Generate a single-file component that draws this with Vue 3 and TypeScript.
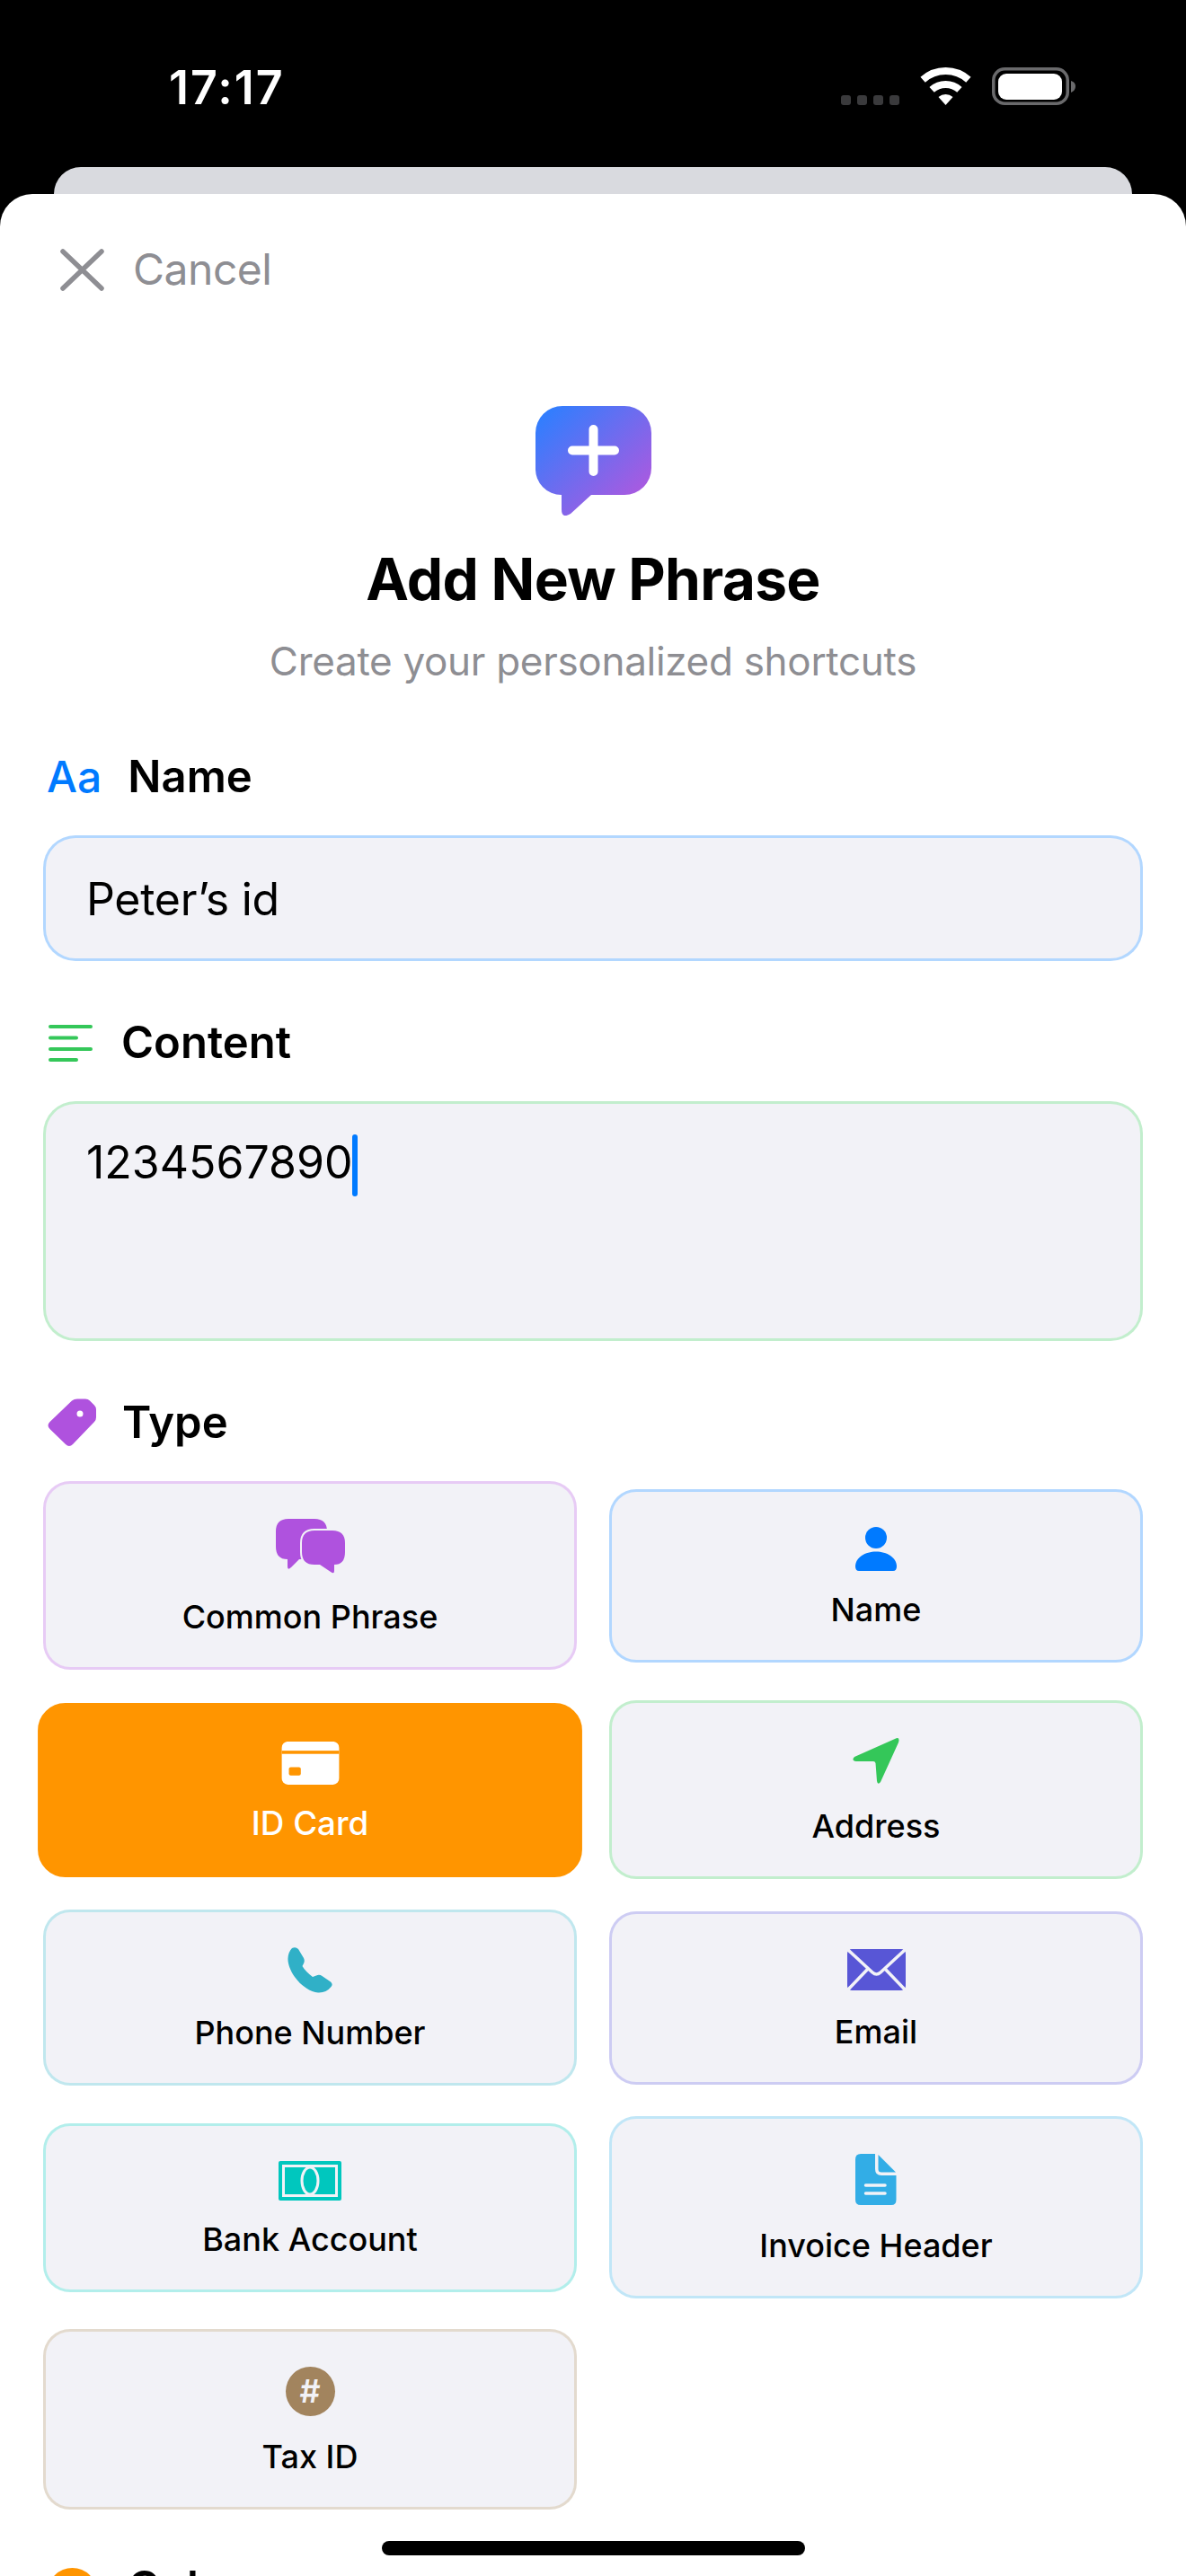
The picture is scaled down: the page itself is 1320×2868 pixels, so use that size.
<script setup lang="ts">
interface PhraseType {
  id: string
  label: string
  selected?: boolean
}

const types: PhraseType[] = [
  { id: 'common', label: 'Common Phrase' },
  { id: 'name', label: 'Name' },
  { id: 'card', label: 'ID Card', selected: true },
  { id: 'address', label: 'Address' },
  { id: 'phone', label: 'Phone Number' },
  { id: 'email', label: 'Email' },
  { id: 'bank', label: 'Bank Account' },
  { id: 'invoice', label: 'Invoice Header' },
  { id: 'tax', label: 'Tax ID' },
]
</script>

<template>
  <div class="phone">
    <header class="status">
      <span class="time">17:17</span>
      <svg class="status-icons" width="262" height="42" viewBox="0 0 262 42" aria-hidden="true">
        <g fill="#3a3a3c">
          <rect x="0" y="31" width="11" height="11" rx="3" />
          <rect x="18" y="31" width="11" height="11" rx="3" />
          <rect x="36" y="31" width="11" height="11" rx="3" />
          <rect x="54" y="31" width="11" height="11" rx="3" />
        </g>
        <g transform="translate(88 0)">
          <path d="M3.1 13.8A38 38 0 0 1 53.9 13.8" fill="none" stroke="#fff" stroke-width="8" />
          <path d="M13.1 24.9A23 23 0 0 1 43.9 24.9" fill="none" stroke="#fff" stroke-width="8" />
          <path d="M28.5 42L20.5 33.1A12 12 0 0 1 36.5 33.1Z" fill="#fff" />
        </g>
        <rect x="169.75" y="1.75" width="82.5" height="38.5" rx="12.5" fill="none" stroke="#6a6a6c" stroke-width="3.5" />
        <rect x="175" y="7" width="71" height="29" rx="9" fill="#fff" />
        <path d="M256 15Q261 16.5 261 21Q261 26 256 28Z" fill="#6a6a6c" />
      </svg>
    </header>
    <div class="under-sheet"></div>

    <main class="sheet">
      <div class="cancel">
        <svg width="49" height="47" viewBox="0 0 49 47" aria-hidden="true">
          <path d="M3 3L46 44M46 3L3 44" fill="none" stroke="#8e8e93" stroke-width="5.500" stroke-linecap="round" />
        </svg>
        <span>Cancel</span>
      </div>

      <section class="intro">
        <svg width="129" height="122" viewBox="0 0 129 122" aria-hidden="true">
          <defs>
            <linearGradient id="logoFill" x1="0" y1="0" x2="1" y2="1">
              <stop offset="0.05" stop-color="#2d7fff" />
              <stop offset="0.85" stop-color="#a95ae0" />
            </linearGradient>
          </defs>
          <path d="M30 0H99A30 30 0 0 1 129 30V69A30 30 0 0 1 99 99H62L39 120Q29 126 29 115V99A29 29 0 0 1 0 69V30A30 30 0 0 1 30 0Z" fill="url(#logoFill)" />
          <path d="M64.5 26V73M41 49.5H88" stroke="#fff" stroke-width="10" stroke-linecap="round" fill="none" />
        </svg>
        <h1>Add New Phrase</h1>
        <p>Create your personalized shortcuts</p>
      </section>

      <div class="label first">
        <span class="aa">Aa</span>
        <span class="label-text">Name</span>
      </div>
      <div class="field name-field">Peter’s id</div>

      <div class="label content-label">
        <svg width="49" height="41" viewBox="0 0 49 41" aria-hidden="true">
          <path d="M2 2H47M2 14.500H31M2 27H47M2 39H31" stroke="#34c759" stroke-width="4" stroke-linecap="round" fill="none" />
        </svg>
        <span class="label-text">Content</span>
      </div>
      <div class="field content-field">
        <span>1234567890</span>
        <i class="caret"></i>
      </div>

      <div class="label">
        <svg width="54" height="54" viewBox="0 0 54 54" aria-hidden="true">
          <path fill-rule="evenodd" fill="#af52de" d="M33 .5H42Q45 .5 47 2.500L52 7.500Q54 9.500 54 12.500V21Q54 24 52 26L28 51Q24 55 20 51L2.500 34Q-1.500 30 2.500 26L27 2.500Q29.500 .5 33 .5ZM36 13.500A3.500 3.500 0 1 0 36 20.500A3.500 3.500 0 1 0 36 13.500Z" />
        </svg>
        <span class="label-text">Type</span>
      </div>

      <div class="types">
        <button
          v-for="t in types"
          :key="t.id"
          type="button"
          class="type-card"
          :class="['t-' + t.id, { selected: t.selected }]"
        >
          <span class="type-icon">
            <svg v-if="t.id === 'common'" width="77" height="61" viewBox="0 0 77 61" aria-hidden="true">
              <path fill="#af52de" d="M14 0H43Q57 0 57 14V31Q57 45 43 45H26L17 54Q13 58 13 53V45Q0 45 0 31V14Q0 0 14 0Z" />
              <path fill="#af52de" stroke="#f2f2f7" stroke-width="4" paint-order="stroke" d="M43 13H63Q77 13 77 27V37Q77 51 65 51V58Q65 62 61 59L49 51H43Q29 51 29 37V27Q29 13 43 13Z" />
            </svg>
            <svg v-else-if="t.id === 'name'" width="46" height="49" viewBox="0 0 46 49" aria-hidden="true">
              <circle cx="23" cy="12" r="12" fill="#007aff" />
              <path fill="#007aff" d="M4 49Q0 49 0 44C0 34 11 27.500 23 27.500C35 27.500 46 34 46 44Q46 49 42 49Z" />
            </svg>
            <svg v-else-if="t.id === 'card'" width="63" height="47" viewBox="0 0 63 47" aria-hidden="true">
              <rect width="63" height="47" rx="7" fill="#fff" />
              <rect y="10" width="63" height="3.500" fill="#ff9500" />
              <rect x="8" y="28" width="13" height="9" rx="2" fill="#ff9500" />
            </svg>
            <svg v-else-if="t.id === 'address'" width="52" height="52" viewBox="0 0 52 52" aria-hidden="true">
              <path fill="#34c759" d="M47 1Q53 -2 51 5L31 49Q28 53 27 48L25.500 28Q25 26 23 26L4 26Q-2 25 2 21Z" />
            </svg>
            <svg v-else-if="t.id === 'phone'" width="50" height="51" viewBox="0 0 50 51" aria-hidden="true">
              <path fill="#30b0c7" d="M5 1Q9 -1 12 2L18 12Q19.500 15 18 18L16.500 21Q20 27 28 33L32 31.500Q35.500 30 38.500 32L48 38.500Q51 41 48.500 44Q43 51 34 50.500C26 50 15 43 8 33C3 26 0 18 .5 12Q1 5 5 1Z" />
            </svg>
            <svg v-else-if="t.id === 'email'" width="65" height="46" viewBox="0 0 65 46" aria-hidden="true">
              <rect width="65" height="46" rx="5" fill="#5856d6" />
              <path d="M1 1L28 26Q32.500 30 37 26L64 1M1 45L23 22M64 45L42 22" fill="none" stroke="#f2f2f7" stroke-width="3.500" />
            </svg>
            <svg v-else-if="t.id === 'bank'" width="70" height="44" viewBox="0 0 70 44" aria-hidden="true">
              <rect width="70" height="44" rx="2" fill="#00c7be" />
              <rect x="5.500" y="5.500" width="59" height="33" fill="none" stroke="#f2f2f7" stroke-width="3" />
              <ellipse cx="35" cy="22" rx="9" ry="15" fill="none" stroke="#f2f2f7" stroke-width="3" />
            </svg>
            <svg v-else-if="t.id === 'invoice'" width="46" height="57" viewBox="0 0 46 57" aria-hidden="true">
              <path fill="#32ade6" d="M6 0H22V17Q22 24 29 24H45.500V51Q45.500 57 40 57H6Q0 57 0 51V6Q0 0 6 0Z" />
              <path fill="#32ade6" d="M25.500 1L45 20.500H29Q25.500 20.500 25.500 17Z" />
              <path d="M11.500 35H33M11.500 44H33" stroke="#f2f2f7" stroke-width="3.500" stroke-linecap="round" fill="none" />
            </svg>
            <span v-else class="tax-disc">#</span>
          </span>
          <span class="type-label">{{ t.label }}</span>
        </button>
      </div>

      <div class="label color-label">
        <i class="color-dot"></i>
        <span class="label-text">Color</span>
      </div>

      <div class="home-bar"></div>
    </main>
  </div>
</template>

<style>
html,
body {
  margin: 0;
  background: #000;
}
</style>

<style scoped>
.phone {
  width: 1320px;
  height: 2868px;
  overflow: hidden;
  background: #000;
  font-family: Inter, "Noto Sans", sans-serif;
  color: #000;
}
.status {
  box-sizing: border-box;
  height: 186px;
  padding: 66px 122px 0 188px;
  display: flex;
  justify-content: space-between;
  align-items: flex-start;
}
.time {
  color: #fff;
  font-size: 52px;
  line-height: 64px;
  font-weight: 600;
  letter-spacing: 2px;
}
.status-icons {
  margin-top: 9px;
}
.under-sheet {
  height: 30px;
  margin: 0 60px;
  border-radius: 36px 36px 0 0;
  background: #d9dadf;
}
.sheet {
  position: relative;
  box-sizing: border-box;
  height: 2652px;
  padding: 54px 48px 0;
  overflow: hidden;
  background: #fff;
  border-radius: 36px 36px 0 0;
}
.cancel {
  display: flex;
  align-items: center;
  gap: 32px;
  height: 60px;
  margin-left: 19px;
  color: #8e8e93;
  font-size: 48px;
  line-height: 60px;
  letter-spacing: -0.5px;
}
.intro {
  display: flex;
  flex-direction: column;
  align-items: center;
  margin-top: 122px;
}
.intro h1 {
  margin: 33px 0 0;
  font-size: 64px;
  line-height: 76px;
  font-weight: 700;
  letter-spacing: -0.7px;
}
.intro p {
  margin: 26px 0 0;
  color: #8e8e93;
  font-size: 44px;
  line-height: 54px;
  letter-spacing: -0.3px;
}
.label {
  display: flex;
  align-items: center;
  gap: 29px;
  height: 60px;
  margin: 61px 0 35px 5px;
}
.label.first {
  margin-top: 72px;
  margin-left: 4px;
}
.label.content-label {
  margin-left: 6px;
  gap: 32px;
}
.label-text {
  font-size: 49px;
  line-height: 60px;
  font-weight: 600;
}
.aa {
  color: #007aff;
  font-size: 48px;
  line-height: 60px;
  font-weight: 500;
}
.field {
  box-sizing: border-box;
  padding: 0 45px;
  display: flex;
  background: #f2f2f7;
  background-clip: padding-box;
  border: 3px solid;
  border-radius: 36px;
  font-size: 50px;
  line-height: 62px;
}
.name-field {
  height: 140px;
  padding-top: 2px;
  align-items: center;
  letter-spacing: -0.3px;
  border-color: rgba(0, 122, 255, 0.3);
}
.content-field {
  height: 267px;
  padding-top: 34px;
  align-items: flex-start;
  border-color: rgba(52, 199, 89, 0.3);
}
.caret {
  width: 6px;
  height: 69px;
  border-radius: 3px;
  background: #007aff;
}
.types {
  display: grid;
  grid-template-columns: 594px 594px;
  column-gap: 36px;
  row-gap: 34px;
  align-items: center;
}
.type-card {
  box-sizing: border-box;
  display: flex;
  flex-direction: column;
  align-items: center;
  gap: 22px;
  width: 100%;
  margin: 0;
  padding: 39px 0 34px;
  background: #f2f2f7;
  background-clip: padding-box;
  border: 3px solid transparent;
  border-radius: 30px;
  font-family: inherit;
  color: #000;
}
.type-icon {
  display: flex;
  align-items: flex-start;
  justify-content: center;
}
.type-label {
  font-size: 36px;
  line-height: 44px;
  font-weight: 500;
}
.t-common {
  border-color: rgba(175, 82, 222, 0.3);
}
.t-common .type-icon {
  height: 65px;
}
.t-name {
  border-color: rgba(0, 122, 255, 0.3);
}
.t-name .type-icon {
  height: 48px;
}
.t-card .type-icon {
  height: 45px;
}
.t-address {
  border-color: rgba(52, 199, 89, 0.3);
}
.t-address .type-icon {
  height: 54px;
}
.t-phone {
  border-color: rgba(48, 176, 199, 0.3);
}
.t-phone .type-icon {
  height: 51px;
}
.t-email {
  border-color: rgba(88, 86, 214, 0.3);
}
.t-email .type-icon {
  height: 48px;
}
.t-bank {
  border-color: rgba(0, 199, 190, 0.3);
}
.t-bank .type-icon {
  height: 43px;
}
.t-invoice {
  border-color: rgba(50, 173, 230, 0.3);
}
.t-invoice .type-icon {
  height: 58px;
}
.t-tax {
  border-color: rgba(162, 132, 94, 0.3);
}
.t-tax .type-icon {
  height: 56px;
}
.selected {
  background: #ff9500;
  background-clip: border-box;
  border-color: #ff9500;
  color: #fff;
  transform: scale(1.02);
}
.tax-disc {
  flex: none;
  width: 55px;
  height: 55px;
  border-radius: 50%;
  background: #a2845e;
  color: #f2f2f7;
  font-size: 36px;
  line-height: 55px;
  font-weight: 600;
  text-align: center;
}
.label.color-label {
  margin-top: 57px;
  gap: 34px;
  align-items: flex-start;
}
.color-dot {
  width: 55px;
  height: 55px;
  margin-top: 8px;
  border-radius: 50%;
  background: #ff9500;
}
.home-bar {
  position: absolute;
  left: 425px;
  top: 2613px;
  width: 471px;
  height: 16px;
  border-radius: 8px;
  background: #000;
}
</style>
